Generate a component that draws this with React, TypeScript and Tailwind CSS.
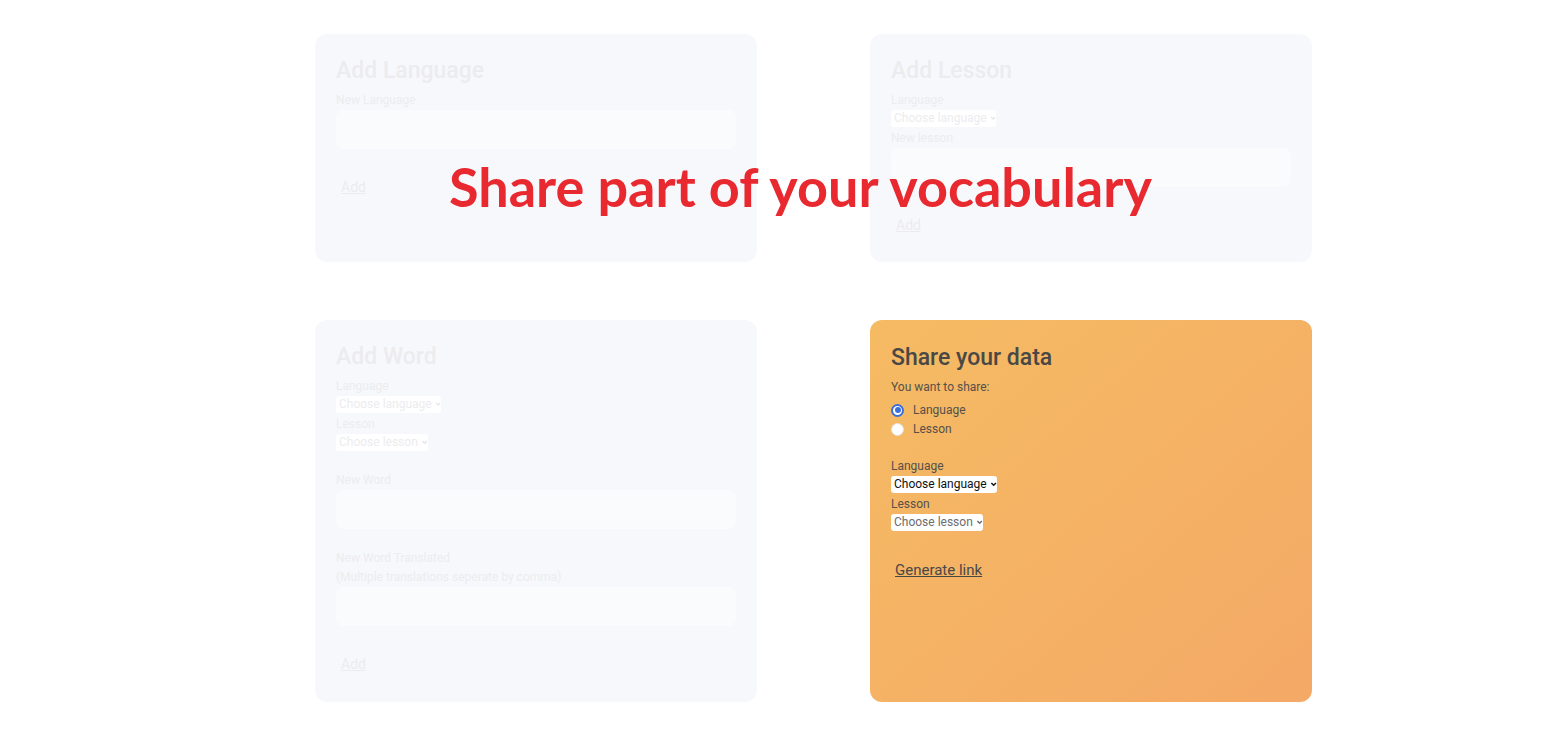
import React from "react";

const fadedText = "text-[#ececee]";

function Chevron({ color }: { color: string }) {
  return (
    <svg width="8" height="8" viewBox="0 0 8 8" className="ml-[3px]">
      <path d="M1.5 2.8 L4 5.3 L6.5 2.8" fill="none" stroke={color} strokeWidth="1.6" />
    </svg>
  );
}

function FakeSelect({ label, width, textClass, chevron }: { label: string; width: string; textClass: string; chevron: string }) {
  return (
    <div className={`flex items-center h-[17px] rounded-[3px] bg-white pl-[3px] ${width}`}>
      <span className={`text-[12px] leading-[17px] whitespace-nowrap ${textClass}`}>{label}</span>
      <Chevron color={chevron} />
    </div>
  );
}

function Label({ children, className = "" }: { children: React.ReactNode; className?: string }) {
  return <div className={`text-[12px] leading-[19px] ${className}`}>{children}</div>;
}

function FadedInput() {
  return <div className="h-[39px] w-full rounded-[8px] bg-[#fafbfd]" />;
}

function FadedButton({ className = "" }: { className?: string }) {
  return (
    <div className={`pl-[5px] ${className}`}>
      <span className={`text-[14px] leading-[20px] underline ${fadedText}`}>Add</span>
    </div>
  );
}

function Title({ children, className }: { children: React.ReactNode; className: string }) {
  return <h2 className={`text-[23px] leading-[28px] font-medium mb-[5.5px] ${className}`}>{children}</h2>;
}

function FadedCard({ children, height }: { children: React.ReactNode; height: string }) {
  return (
    <div className={`w-[442px] ${height} rounded-[12px] bg-[#f7f8fc] px-[21px] pt-[23px]`}>{children}</div>
  );
}

function Radio({ checked, label }: { checked: boolean; label: string }) {
  return (
    <div className="flex items-center h-[19px]">
      {checked ? (
        <span className="flex items-center justify-center w-[13px] h-[13px] rounded-full border-[2px] border-[#3b6fd8] bg-white">
          <span className="w-[6px] h-[6px] rounded-full bg-[#3b6fd8]" />
        </span>
      ) : (
        <span className="w-[13px] h-[13px] rounded-full border border-[#e6e0d6] bg-white" />
      )}
      <span className="ml-[9px] text-[12px] text-[#56504a]">{label}</span>
    </div>
  );
}

export default function App() {
  return (
    <div className="relative min-h-screen bg-white" style={{ fontFamily: "Roboto, 'Liberation Sans', sans-serif" }}>
      <div className="grid grid-cols-[442px_442px] gap-x-[113px] gap-y-[58px] pl-[315px] pt-[34px]">
        <FadedCard height="h-[228px]">
          <Title className={fadedText}>Add Language</Title>
          <Label className={fadedText}>New Language</Label>
          <FadedInput />
          <FadedButton className="mt-[26px]" />
        </FadedCard>

        <FadedCard height="h-[228px]">
          <Title className={fadedText}>Add Lesson</Title>
          <Label className={fadedText}>Language</Label>
          <FakeSelect label="Choose language" width="w-[105px]" textClass={fadedText} chevron="#e6e6e8" />
          <Label className={`mt-[2px] ${fadedText}`}>New lesson</Label>
          <FadedInput />
          <FadedButton className="mt-[26px]" />
        </FadedCard>

        <FadedCard height="h-[382px]">
          <Title className={fadedText}>Add Word</Title>
          <Label className={fadedText}>Language</Label>
          <FakeSelect label="Choose language" width="w-[105px]" textClass={fadedText} chevron="#e6e6e8" />
          <Label className={`mt-[2px] ${fadedText}`}>Lesson</Label>
          <FakeSelect label="Choose lesson" width="w-[92px]" textClass={fadedText} chevron="#e6e6e8" />
          <Label className={`mt-[20px] ${fadedText}`}>New Word</Label>
          <FadedInput />
          <Label className={`mt-[20px] ${fadedText}`}>New Word Translated</Label>
          <Label className={fadedText}>(Multiple translations seperate by comma)</Label>
          <FadedInput />
          <FadedButton className="mt-[26px]" />
        </FadedCard>

        <div className="w-[442px] h-[382px] rounded-[12px] bg-linear-to-br from-[#f5bb63] to-[#f4a966] px-[21px] pt-[24px]">
          <Title className="text-[#4a4846]">Share your data</Title>
          <Label className="text-[#56504a]">You want to share:</Label>
          <div className="mt-[4px]">
            <Radio checked label="Language" />
            <Radio checked={false} label="Lesson" />
          </div>
          <Label className="mt-[18px] text-[#56504a]">Language</Label>
          <FakeSelect label="Choose language" width="w-[106px]" textClass="text-[#111111]" chevron="#111111" />
          <Label className="mt-[2px] text-[#56504a]">Lesson</Label>
          <FakeSelect label="Choose lesson" width="w-[92px]" textClass="text-[#6d6d6d]" chevron="#6d6d6d" />
          <div className="mt-[27px] pl-[4px]">
            <span className="text-[15px] leading-[20px] underline text-[#4a4846]">Generate link</span>
          </div>
        </div>
      </div>

      <div
        className="absolute top-[157px] left-[449px] whitespace-nowrap text-[54px] leading-[60px] font-bold text-[#e8292f]"
        style={{ fontFamily: "Lato, 'Open Sans', sans-serif" }}
      >
        Share part of your vocabulary
      </div>
    </div>
  );
}
